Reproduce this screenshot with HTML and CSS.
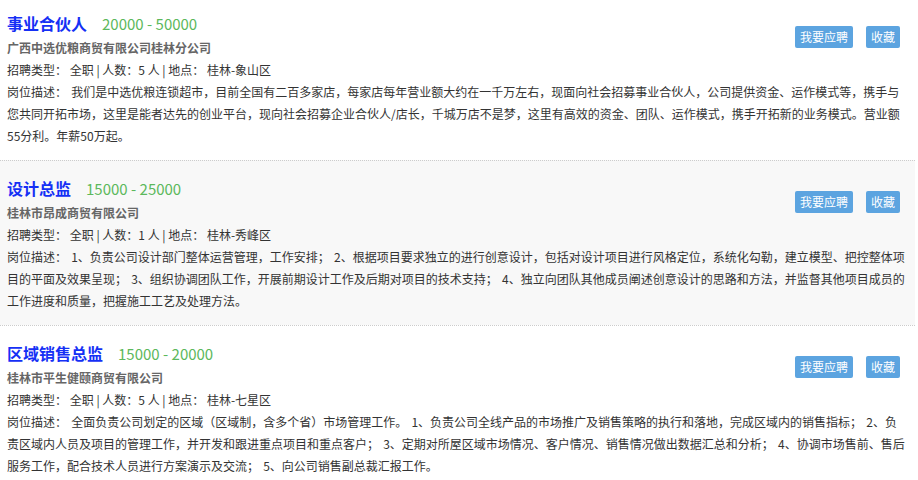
FILE: index.html
```html
<!DOCTYPE html>
<html lang="zh-CN">
<head>
  <meta charset="UTF-8">
  <meta name="viewport" content="width=device-width, initial-scale=1">
  <title>招聘信息</title>
  <link rel="stylesheet" href="styles.css">
</head>
<body>
  <div class="job-list">
    <div class="job">
      <div class="job-top">
        <div class="job-info">
          <h3 class="job-title"><a href="#">事业合伙人</a><span class="salary">20000 - 50000</span></h3>
          <p class="company">广西中选优粮商贸有限公司桂林分公司</p>
          <p class="meta">招聘类型： 全职 | 人数：5 人 | 地点： 桂林-象山区</p>
        </div>
        <div class="job-actions">
          <a href="#" class="btn">我要应聘</a>
          <a href="#" class="btn">收藏</a>
        </div>
      </div>
      <p class="desc">岗位描述： 我们是中选优粮连锁超市，目前全国有二百多家店，每家店每年营业额大约在一千万左右，现面向社会招募事业合伙人，公司提供资金、运作模式等，携手与您共同开拓市场，这里是能者达先的创业平台，现向社会招募企业合伙人/店长，千城万店不是梦，这里有高效的资金、团队、运作模式，携手开拓新的业务模式。营业额55分利。年薪50万起。</p>
    </div>

    <div class="job hover">
      <div class="job-top">
        <div class="job-info">
          <h3 class="job-title"><a href="#">设计总监</a><span class="salary">15000 - 25000</span></h3>
          <p class="company">桂林市昂成商贸有限公司</p>
          <p class="meta">招聘类型： 全职 | 人数：1 人 | 地点： 桂林-秀峰区</p>
        </div>
        <div class="job-actions">
          <a href="#" class="btn">我要应聘</a>
          <a href="#" class="btn">收藏</a>
        </div>
      </div>
      <p class="desc">岗位描述： 1、负责公司设计部门整体运营管理，工作安排； 2、根据项目要求独立的进行创意设计，包括对设计项目进行风格定位，系统化勾勒，建立模型、把控整体项目的平面及效果呈现； 3、组织协调团队工作，开展前期设计工作及后期对项目的技术支持； 4、独立向团队其他成员阐述创意设计的思路和方法，并监督其他项目成员的工作进度和质量，把握施工工艺及处理方法。</p>
    </div>

    <div class="job">
      <div class="job-top">
        <div class="job-info">
          <h3 class="job-title"><a href="#">区域销售总监</a><span class="salary">15000 - 20000</span></h3>
          <p class="company">桂林市平生健颐商贸有限公司</p>
          <p class="meta">招聘类型： 全职 | 人数：5 人 | 地点： 桂林-七星区</p>
        </div>
        <div class="job-actions">
          <a href="#" class="btn">我要应聘</a>
          <a href="#" class="btn">收藏</a>
        </div>
      </div>
      <p class="desc">岗位描述： 全面负责公司划定的区域（区域制，含多个省）市场管理工作。 1、负责公司全线产品的市场推广及销售策略的执行和落地，完成区域内的销售指标； 2、负责区域内人员及项目的管理工作，并开发和跟进重点项目和重点客户； 3、定期对所屋区域市场情况、客户情况、销售情况做出数据汇总和分析； 4、协调市场售前、售后服务工作，配合技术人员进行方案演示及交流； 5、向公司销售副总裁汇报工作。</p>
    </div>
  </div>
</body>
</html>
```

FILE: styles.css
```css
html, body {
  margin: 0;
  padding: 0;
  background-color: #ffffff;
  color: #333333;
  font-family: "Microsoft YaHei", "Noto Sans CJK SC", sans-serif;
  font-size: 12px;
}

.job-list {
  width: 915px;
}

.job {
  border-top: 1px dotted #cccccc;
  padding: 14px 10px 13px 7px;
}

.job:first-child {
  border-top: none;
  padding-top: 10px;
}

.job.hover {
  background-color: #f8f8f8;
}

.job-top {
  display: flex;
  justify-content: space-between;
  align-items: flex-start;
}

.job-title {
  margin: 0;
  font-size: 16px;
  line-height: 26px;
  font-weight: bold;
}

.job-title a {
  color: #1530f5;
  text-decoration: none;
}

.salary {
  margin-left: 15px;
  color: #5cb85c;
  font-size: 15px;
  font-weight: normal;
}

.company {
  margin: 0;
  line-height: 22px;
  color: #666666;
  font-weight: bold;
}

.meta {
  margin: 0;
  line-height: 22px;
}

.job-actions {
  display: flex;
  gap: 13px;
  margin-top: 16px;
  margin-right: 5px;
}

.btn {
  display: block;
  height: 22px;
  line-height: 22px;
  padding: 0 5px;
  border-radius: 2px;
  background-color: #5ca4e0;
  color: #ffffff;
  text-decoration: none;
}

.desc {
  margin: 0;
  line-height: 22px;
  word-spacing: 1.5px;
}
```
